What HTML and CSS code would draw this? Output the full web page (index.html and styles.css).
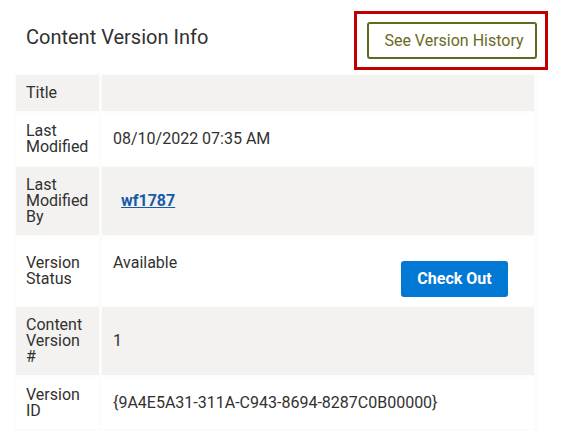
FILE: index.html
```html
<!DOCTYPE html>
<html lang="en">
<head>
<meta charset="utf-8">
<title>Content Version Info</title>
<link rel="stylesheet" href="styles.css">
</head>
<body>
<div class="panel">
  <div class="header">
    <h2 class="title">Content Version Info</h2>
    <div class="highlight">
      <button class="btn-outline" type="button">See Version History</button>
    </div>
  </div>
  <table class="info">
    <tbody>
      <tr class="shade">
        <th class="label">Title</th>
        <td class="value"></td>
      </tr>
      <tr>
        <th class="label">Last Modified</th>
        <td class="value">08/10/2022 07:35 AM</td>
      </tr>
      <tr class="shade">
        <th class="label">Last Modified By</th>
        <td class="value"><a class="user-link" href="#">wf1787</a></td>
      </tr>
      <tr>
        <th class="label">Version Status</th>
        <td class="value value-top">
          <div class="status">
            <span class="status-text">Available</span>
            <button class="btn-primary" type="button">Check Out</button>
          </div>
        </td>
      </tr>
      <tr class="shade">
        <th class="label">Content Version #</th>
        <td class="value">1</td>
      </tr>
      <tr>
        <th class="label">Version ID</th>
        <td class="value">{9A4E5A31-311A-C943-8694-8287C0B00000}</td>
      </tr>
    </tbody>
  </table>
</div>
</body>
</html>
```

FILE: styles.css
```css
html, body {
  margin: 0;
  padding: 0;
  background: #ffffff;
}

body {
  font-family: Roboto, "Liberation Sans", Arial, sans-serif;
  color: #323130;
  font-size: 16px;
}

.panel {
  padding: 11px 20px 0 13px;
}

.header {
  display: flex;
  justify-content: space-between;
  align-items: flex-start;
}

.title {
  margin: 14px 0 0 13px;
  font-size: 20px;
  line-height: 24px;
  font-weight: 400;
  color: #323130;
}

.highlight {
  border: 3px solid #c00000;
  padding: 8px 8px 8px 10px;
}

.btn-outline {
  display: block;
  box-sizing: border-box;
  width: 170px;
  height: 37px;
  padding: 0 0 0 4px;
  border: 2px solid #5a6e1e;
  border-radius: 3px;
  background: #ffffff;
  color: #6a6a22;
  font-family: Roboto, "Liberation Sans", Arial, sans-serif;
  font-size: 16px;
  text-align: center;
}

.info {
  margin-top: 3px;
  width: 524px;
  border-collapse: separate;
  border-spacing: 3px 2px;
  background: #fcfcfb;
  table-layout: fixed;
}

.info th,
.info td {
  background: #ffffff;
  font-size: 16px;
  line-height: 16px;
  font-weight: 400;
  text-align: left;
  vertical-align: middle;
}

.info tr.shade th,
.info tr.shade td {
  background: #f3f2f1;
}

.label {
  width: 66px;
  padding: 10px 7px 10px 10px;
}

.value {
  padding: 10px 10px 10px 11px;
}

.value-top {
  vertical-align: top !important;
  padding-bottom: 8px;
}

.user-link {
  margin-left: 8px;
  color: #175ca6;
  font-weight: 700;
  text-decoration: underline;
}

.status {
  display: flex;
  align-items: flex-start;
  justify-content: space-between;
}

.status-text {
  margin-top: 8px;
}

.btn-primary {
  margin: 14px 16px 0 0;
  height: 36px;
  min-width: 107px;
  padding: 0 16px 1px;
  border: none;
  border-radius: 3px;
  background: #0078d4;
  color: #ffffff;
  font-family: Roboto, "Liberation Sans", Arial, sans-serif;
  font-size: 16px;
  font-weight: 700;
}
```
